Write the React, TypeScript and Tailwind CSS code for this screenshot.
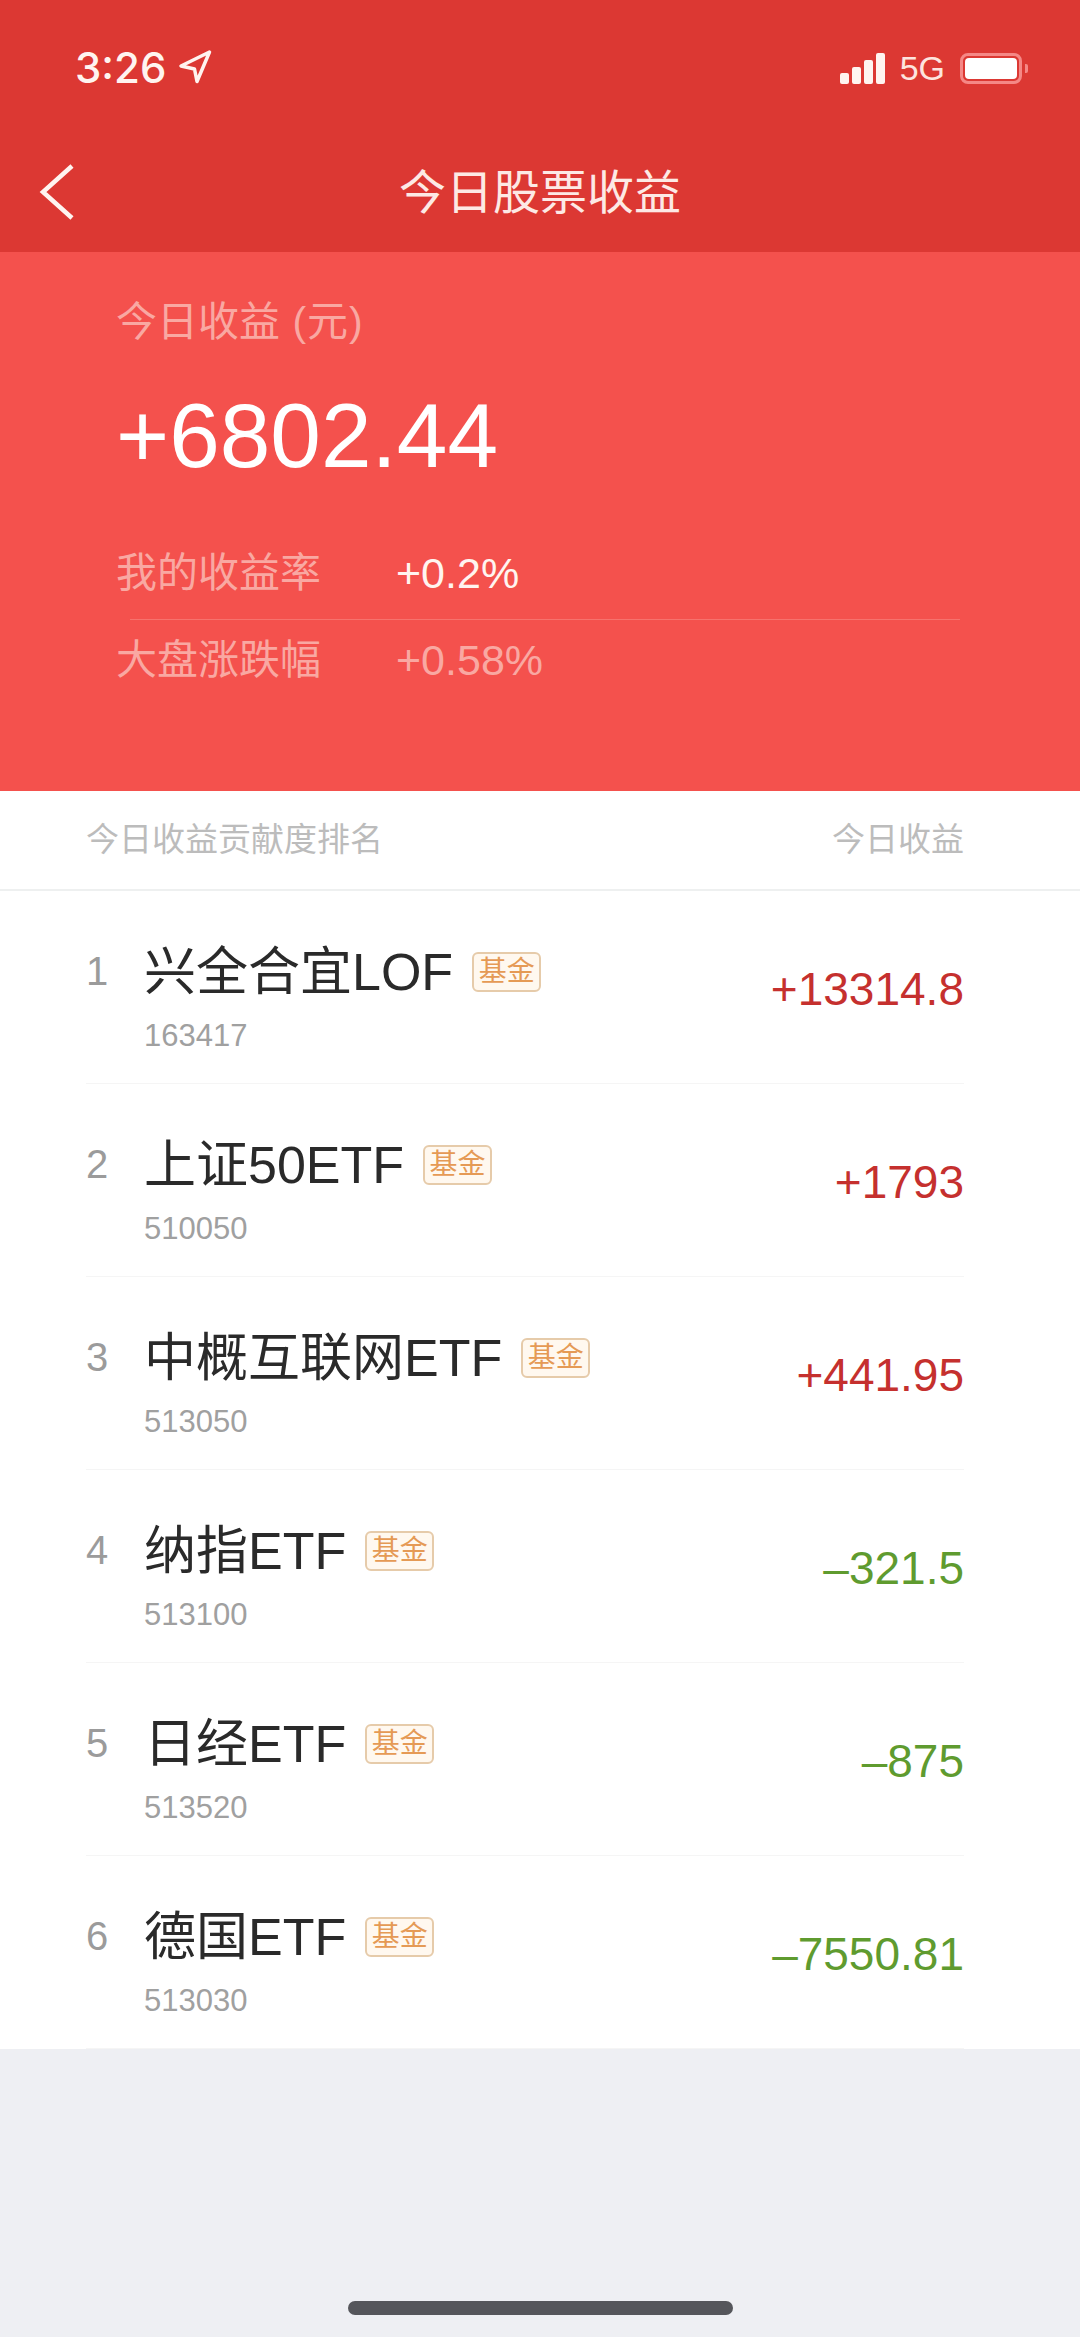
const FONT = "[font-family:'Liberation_Sans','Noto_Sans_CJK_SC',sans-serif]";

interface Holding {
  rank: number;
  name: string;
  code: string;
  value: string;
  up: boolean;
}

const holdings: Holding[] = [
  { rank: 1, name: "兴全合宜LOF", code: "163417", value: "+13314.8", up: true },
  { rank: 2, name: "上证50ETF", code: "510050", value: "+1793", up: true },
  { rank: 3, name: "中概互联网ETF", code: "513050", value: "+441.95", up: true },
  { rank: 4, name: "纳指ETF", code: "513100", value: "–321.5", up: false },
  { rank: 5, name: "日经ETF", code: "513520", value: "–875", up: false },
  { rank: 6, name: "德国ETF", code: "513030", value: "–7550.81", up: false },
];

function StatusBar() {
  return (
    <div className="flex h-[136px] items-center justify-between pl-[75px] pr-[52px] text-white">
      <div className="flex items-center gap-[12px]">
        <span className="font-['Inter'] text-[42px] font-medium leading-none text-[#fff4f0]">3:26</span>
        <svg width="34" height="34" viewBox="0 0 34 34" fill="none" className="mt-[-2px]">
          <path d="M31.5 2 3 16l13.5 3L19 31.5 31.5 2Z" stroke="#fff4f0" strokeWidth="3.5" strokeLinejoin="round" />
        </svg>
      </div>
      <div className="flex items-center">
        <div className="flex h-[31px] items-end gap-[3px]">
          <div className="h-[11px] w-[9px] rounded-[2px] bg-[#fff4f0]" />
          <div className="h-[17px] w-[9px] rounded-[2px] bg-[#fff4f0]" />
          <div className="h-[24px] w-[9px] rounded-[2px] bg-[#fff4f0]" />
          <div className="h-[31px] w-[9px] rounded-[2px] bg-[#fff4f0]" />
        </div>
        <span className="ml-[15px] text-[34px] leading-none text-[#fde4df]">5G</span>
        <div className="ml-[15px] flex h-[31px] w-[62px] rounded-[8px] border-[3px] border-[#f58886] p-[2px]">
          <div className="flex-1 rounded-[4px] bg-white" />
        </div>
        <div className="ml-[3px] h-[9px] w-[3px] rounded-r-[2px] bg-[#f58886]" />
      </div>
    </div>
  );
}

function Badge() {
  return (
    <span className="ml-[19px] flex h-[40px] w-[69px] items-center justify-center rounded-[6px] border-2 border-[#e6cbaa] bg-[#fff8ef] text-[28px] leading-none text-[#e59a55]">
      基金
    </span>
  );
}

function HoldingRow({ item }: { item: Holding }) {
  return (
    <div className="ml-[86px] mr-[116px] flex h-[193px] border-b border-[#f5f5f5]">
      <div className="w-[58px] pt-[57px] text-[40px] leading-[46px] text-[#9b9b9b]">{item.rank}</div>
      <div className="flex-1 pt-[52px]">
        <div className="flex h-[58px] items-center">
          <span className="text-[52px] leading-[58px] text-[#2a2a2a]">{item.name}</span>
          <Badge />
        </div>
        <div className="mt-[17px] text-[31px] leading-[36px] text-[#a0a0a0]">{item.code}</div>
      </div>
      <div className={`pt-[72px] text-[46px] leading-[52px] ${item.up ? "text-[#c5302e]" : "text-[#5f9b2f]"}`}>
        {item.value}
      </div>
    </div>
  );
}

export default function App() {
  return (
    <div className={`${FONT} flex min-h-[2337px] w-[1080px] flex-col bg-[#eeeff3]`}>
      <header className="h-[252px] bg-[#dc3833]">
        <StatusBar />
        <div className="grid h-[112px] grid-cols-[1fr_auto_1fr] items-center">
          <svg width="40" height="60" viewBox="0 0 40 60" fill="none" className="ml-[37px]">
            <path d="M35 4 6 30l29 26" stroke="#fff4f0" strokeWidth="4.5" />
          </svg>
          <h1 className="text-[47px] font-normal leading-none text-[#fde9e5]">今日股票收益</h1>
          <div />
        </div>
      </header>

      <section className="h-[539px] bg-[#f4514d] pl-[116px] pr-[120px] pt-[46px]">
        <div className="text-[41px] leading-[48px] text-[#f9a8a2]">
          今日收益<span className="tracking-[1px]"> (元)</span>
        </div>
        <div className="mt-[40px] text-[91px] leading-[100px] text-white">+6802.44</div>
        <div className="mt-[41px] flex h-[92px] items-center">
          <span className="w-[280px] text-[41px] leading-none text-[#f9a8a2]">我的收益率</span>
          <span className="text-[43px] leading-none text-[#fff4f0]">+0.2%</span>
        </div>
        <div className="ml-[14px] h-px bg-[#f7726d]" />
        <div className="flex h-[81px] items-center">
          <span className="w-[280px] text-[41px] leading-none text-[#f9a8a2]">大盘涨跌幅</span>
          <span className="text-[43px] leading-none text-[#f9a8a2]">+0.58%</span>
        </div>
      </section>

      <section className="flex h-[100px] items-start justify-between border-b-2 border-[#eef0f0] bg-white pl-[86px] pr-[116px] pt-[29px] text-[33px] leading-[40px] text-[#bcbcbc]">
        <span>今日收益贡献度排名</span>
        <span>今日收益</span>
      </section>

      <section className="bg-white">
        {holdings.map((item) => (
          <HoldingRow key={item.code} item={item} />
        ))}
      </section>

      <div className="flex flex-1 items-end justify-center pb-[22px]">
        <div className="h-[14px] w-[385px] rounded-full bg-[#55565b]" />
      </div>
    </div>
  );
}
